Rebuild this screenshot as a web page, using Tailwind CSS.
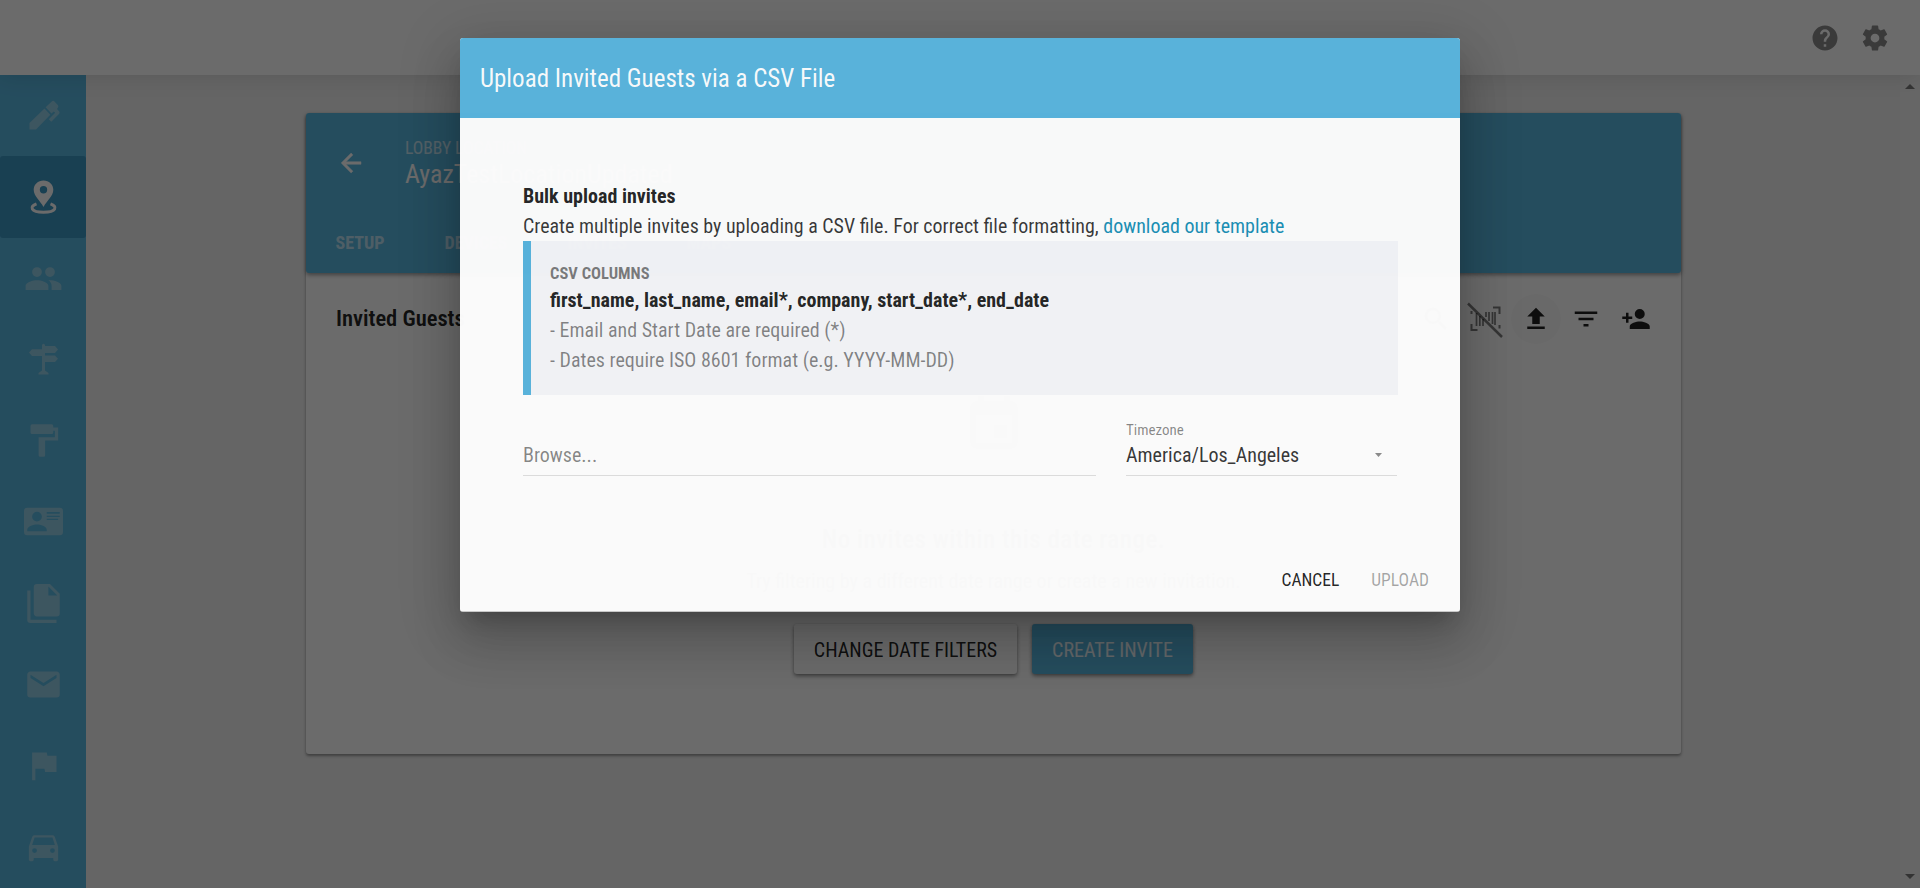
<!DOCTYPE html>
<html lang="en">
<head>
<meta charset="utf-8">
<title>Upload Invited Guests</title>
<script src="https://cdn.jsdelivr.net/npm/@tailwindcss/browser@4"></script>
</head>
<body class="relative flex h-[888px] flex-col overflow-hidden bg-[#f0f0f0] font-['Roboto_Condensed',Roboto,sans-serif] text-[20px] text-black/87">

<!-- Top bar -->
<header class="relative z-10 flex h-[75px] shrink-0 items-center justify-end gap-5 bg-white pr-[30px] text-[#8a8a8a] shadow-[0_0_22px_rgba(0,0,0,0.13)]">
  <svg class="size-[30px]" viewBox="0 0 24 24" fill="currentColor"><path d="M15.07,11.25L14.17,12.17C13.45,12.89 13,13.5 13,15H11V14.5C11,13.39 11.45,12.39 12.17,11.67L13.41,10.41C13.78,10.05 14,9.55 14,9C14,7.89 13.1,7 12,7A2,2 0 0,0 10,9H8A4,4 0 0,1 12,5A4,4 0 0,1 16,9C16,9.88 15.64,10.67 15.07,11.25M13,19H11V17H13M12,2A10,10 0 0,0 2,12A10,10 0 0,0 12,22A10,10 0 0,0 22,12C22,6.47 17.5,2 12,2Z"/></svg>
  <svg class="size-[30px]" viewBox="0 0 24 24" fill="currentColor"><path d="M12,15.5A3.5,3.5 0 0,1 8.5,12A3.5,3.5 0 0,1 12,8.5A3.5,3.5 0 0,1 15.5,12A3.5,3.5 0 0,1 12,15.5M19.43,12.97C19.47,12.65 19.5,12.33 19.5,12C19.5,11.67 19.47,11.34 19.43,11L21.54,9.37C21.73,9.22 21.78,8.95 21.66,8.73L19.66,5.27C19.54,5.05 19.27,4.96 19.05,5.05L16.56,6.05C16.04,5.66 15.5,5.32 14.87,5.07L14.5,2.42C14.46,2.18 14.25,2 14,2H10C9.75,2 9.54,2.18 9.5,2.42L9.13,5.07C8.5,5.32 7.96,5.66 7.44,6.05L4.95,5.05C4.73,4.96 4.46,5.05 4.34,5.27L2.34,8.73C2.21,8.95 2.27,9.22 2.46,9.37L4.57,11C4.53,11.34 4.5,11.67 4.5,12C4.5,12.33 4.53,12.65 4.57,12.97L2.46,14.63C2.27,14.78 2.21,15.05 2.34,15.27L4.34,18.73C4.46,18.95 4.73,19.03 4.95,18.95L7.44,17.94C7.96,18.34 8.5,18.68 9.13,18.93L9.5,21.58C9.54,21.82 9.75,22 10,22H14C14.25,22 14.46,21.82 14.5,21.58L14.87,18.93C15.5,18.67 16.04,18.34 16.56,17.94L19.05,18.95C19.27,19.03 19.54,18.95 19.66,18.73L21.66,15.27C21.78,15.05 21.73,14.78 21.54,14.63L19.43,12.97Z"/></svg>
</header>

<div class="flex h-[813px]">
  <!-- Sidebar -->
  <nav class="flex w-[86px] shrink-0 flex-col bg-[#5ab7e0] text-[#92cde4] *:flex *:h-[81.25px] *:shrink-0 *:items-center *:justify-center">
    <a><svg class="size-[39px]" viewBox="0 0 39 39" fill="currentColor"><path d="M5.500 33.500V27L20.500 12.500L26.300 18.700L12 33.500Z M21.600 11.300L28 5.200Q29.100 4.400 30.200 5.200L34 9.200Q34.800 10.500 34 11.600L33 13L35.300 15.600Q36 16.800 35.200 17.800L27.300 25.700L24.800 23.300L31.200 16.800L29.800 15.500L27.500 17.500Z"/></svg></a>
    <a class="rounded-[3px] bg-[#3c98c3] pt-px text-white"><svg class="size-[39px]" viewBox="0 0 39 39" fill="currentColor"><path d="M19.500 2.500C14 2.500 9.700 6.500 9.700 11.800C9.700 18 16 22.500 19.500 29C23 22.500 29.300 18 29.300 11.800C29.300 6.500 25 2.500 19.500 2.500ZM19.500 8A3.700 3.700 0 1 1 19.500 15.400A3.700 3.700 0 0 1 19.500 8Z"/><path d="M12.500 25.800C5 28.500 6.500 34.300 19.500 34.300C32.500 34.300 34 28.500 26.500 25.800" fill="none" stroke="currentColor" stroke-width="3"/></svg></a>
    <a><svg class="size-[39px]" viewBox="0 0 24 24" fill="currentColor"><path d="M16,13C15.710,13 15.380,13 15.030,13.050C16.190,13.890 17,15 17,16.500V19H23V16.500C23,14.170 18.330,13 16,13M8,13C5.670,13 1,14.170 1,16.500V19H15V16.500C15,14.170 10.330,13 8,13M8,11A3,3 0 0,0 11,8A3,3 0 0,0 8,5A3,3 0 0,0 5,8A3,3 0 0,0 8,11M16,11A3,3 0 0,0 19,8A3,3 0 0,0 16,5A3,3 0 0,0 13,8A3,3 0 0,0 16,11Z"/></svg></a>
    <a><svg class="size-[39px]" viewBox="0 0 39 39" fill="currentColor"><path d="M18 5Q19.500 2.500 21 5V6H31L34 9.500L31 13H21V15.500H31L34 18.700L31 22H21V30.500L24.500 33V34.500H14.500V33L18 30.500V16H8L5 12.500L8 9.300H18Z"/></svg></a>
    <a><svg class="size-[39px]" viewBox="0 0 24 24" fill="currentColor"><path d="M18,4V3A1,1 0 0,0 17,2H5A1,1 0 0,0 4,3V7A1,1 0 0,0 5,8H17A1,1 0 0,0 18,7V6H19V10H9V21A1,1 0 0,0 10,22H12A1,1 0 0,0 13,21V12H21V4H18Z"/></svg></a>
    <a><svg class="size-[39px]" viewBox="0 0 24 24" fill="currentColor" fill-rule="evenodd"><path d="M2 3.500H22A2 2 0 0 1 24 5.500V18.500A2 2 0 0 1 22 20.500H2A2 2 0 0 1 0 18.500V5.500A2 2 0 0 1 2 3.500ZM14 6.200V7.200H22V6.200ZM14 8.400V9.200H22V8.400ZM14 10.300V11.100H21V10.300ZM8 6A3 3 0 1 0 8 12A3 3 0 0 0 8 6ZM2 17V18H14V17C14 15 10 13.900 8 13.900C6 13.900 2 15 2 17Z"/></svg></a>
    <a><svg class="size-[39px]" viewBox="0 0 24 24" fill="currentColor"><path d="M15,7H20.500L15,1.500V7M8,0H16L22,6V18A2,2 0 0,1 20,20H8C6.890,20 6,19.100 6,18V2A2,2 0 0,1 8,0M4,4V22H20V24H4A2,2 0 0,1 2,22V4H4Z"/></svg></a>
    <a><svg class="size-[39px]" viewBox="0 0 24 24" fill="currentColor"><path d="M20,8L12,13L4,8V6L12,11L20,6M20,4H4C2.890,4 2,4.890 2,6V18A2,2 0 0,0 4,20H20A2,2 0 0,0 22,18V6C22,4.890 21.100,4 20,4Z"/></svg></a>
    <a><svg class="size-[39px]" viewBox="0 0 24 24" fill="currentColor"><path d="M14.400,6L14,4H5V21H7V14H12.600L13,16H20V6H14.400Z"/></svg></a>
    <a><svg class="size-[39px]" viewBox="0 0 24 24" fill="currentColor"><path d="M5,11L6.500,6.500H17.500L19,11M17.500,16A1.500,1.500 0 0,1 16,14.500A1.500,1.500 0 0,1 17.500,13A1.500,1.500 0 0,1 19,14.500A1.500,1.500 0 0,1 17.500,16M6.500,16A1.500,1.500 0 0,1 5,14.500A1.500,1.500 0 0,1 6.500,13A1.500,1.500 0 0,1 8,14.500A1.500,1.500 0 0,1 6.500,16M18.920,6C18.720,5.420 18.160,5 17.500,5H6.500C5.840,5 5.280,5.420 5.080,6L3,12V20A1,1 0 0,0 4,21H5A1,1 0 0,0 6,20V19H18V20A1,1 0 0,0 19,21H20A1,1 0 0,0 21,20V12L18.920,6Z"/></svg></a>
  </nav>

  <!-- Content -->
  <main class="flex grow justify-center pl-px pt-[38px]">
    <section class="h-[641px] w-[1375px] rounded-[3px] bg-white shadow-[0_2px_3px_rgba(0,0,0,0.35),0_1px_3px_rgba(0,0,0,0.06)]">
      <div class="flex h-[160px] flex-col rounded-[3px] bg-[#5ab7e0] text-white shadow-[0_2px_4px_rgba(0,0,0,0.4)]">
        <div class="flex h-[98px] items-center pl-[30px] pt-[2px]">
          <svg class="size-[30px]" viewBox="0 0 24 24" fill="currentColor"><path d="M20,11V13H8L13.500,18.500L12.080,19.920L4.160,12L12.080,4.080L13.500,5.500L8,11H20Z" stroke="currentColor" stroke-width=".4"/></svg>
          <div class="ml-[39px] flex flex-col">
            <span class="text-[17.5px] leading-[22px] text-white/65">LOBBY LOCATION</span>
            <span class="text-[26px] leading-[31px]">AyazTestLocationUpdated</span>
          </div>
        </div>
        <div class="flex h-[62px] items-center gap-[60px] pl-[29.5px] text-[18px] font-bold text-white/60">
          <span>SETUP</span><span>DEVICES</span><span>INVITES</span><span>MAPS</span>
        </div>
      </div>
      <div class="flex h-[92px] items-center justify-between pl-[30px] pr-[20px]">
        <h2 class="text-[22.500px] font-semibold">Invited Guests</h2>
        <div class="flex *:flex *:size-[50px] *:items-center *:justify-center *:rounded-full">
          <span class="text-black/70"><svg class="size-[30px]" viewBox="0 0 24 24" fill="currentColor"><path d="M9.500,3A6.500,6.500 0 0,1 16,9.500C16,11.110 15.410,12.590 14.440,13.730L14.710,14H15.500L20.500,19L19,20.500L14,15.500V14.710L13.730,14.440C12.590,15.410 11.110,16 9.500,16A6.500,6.500 0 0,1 3,9.500A6.500,6.500 0 0,1 9.500,3M9.500,5C7,5 5,7 5,9.500C5,12 7,14 9.500,14C12,14 14,12 14,9.500C14,7 12,5 9.500,5Z"/></svg></span>
          <span class="text-black/50"><svg class="size-[38px]" viewBox="0 0 38 38" fill="none" stroke="currentColor" stroke-width="2"><path d="M26 7.500H32.500V14M32.500 25V28.500M4.500 11V14M4.500 24V30H10.500"/><path d="M9.500 13V26M12.800 16V26M16 19V26M19 12V17M22 12V21M25.500 12V24M28 12V25" stroke-width="1.700"/><path d="M1 3.500L35 37" stroke-width="2.500"/></svg></span>
          <span class="bg-black/[0.02]"><svg class="size-[30px]" viewBox="0 0 24 24" fill="currentColor"><path d="M9,16V10H5L12,3L19,10H15V16H9M5,20V18H19V20H5Z"/></svg></span>
          <span><svg class="size-[30px]" viewBox="0 0 24 24" fill="currentColor"><path d="M6,13H18V11H6M3,6V8H21V6M10,18H14V16H10V18Z"/></svg></span>
          <span><svg class="size-[30px]" viewBox="0 0 24 24" fill="currentColor"><path d="M15,14C12.330,14 7,15.330 7,18V20H23V18C23,15.330 17.670,14 15,14M6,10V7H4V10H1V12H4V15H6V12H9V10M15,12A4,4 0 0,0 19,8A4,4 0 0,0 15,4A4,4 0 0,0 11,8A4,4 0 0,0 15,12Z"/></svg></span>
        </div>
      </div>
      <div class="flex flex-col items-center pt-[29px]">
        <svg class="size-[62px] text-black/30" viewBox="0 0 24 24" fill="currentColor"><path d="M19,19H5V8H19M16,1V3H8V1H6V3H5C3.890,3 3,3.890 3,5V19A2,2 0 0,0 5,21H19A2,2 0 0,0 21,19V5C21,3.890 20.100,3 19,3H18V1M17,12H12V17H17V12Z"/></svg>
        <p class="mt-[66px] text-[25px] font-medium leading-[36px] tracking-[0.5px]">No invites within this date range.</p>
        <p class="mt-[8px] leading-[30px]">Try filtering by a different date range or create a new invitation.</p>
        <div class="mt-[28px] flex h-[50px] gap-[15px] *:flex *:items-center *:justify-center *:rounded-[3px] *:pt-px *:shadow-[0_2px_4px_rgba(0,0,0,0.4),0_1px_3px_rgba(0,0,0,0.12)]">
          <button class="w-[223px]">CHANGE DATE FILTERS</button>
          <button class="w-[161px] bg-[#5ab7e0] text-white/90">CREATE INVITE</button>
        </div>
      </div>
    </section>
  </main>

  <!-- Scroll track -->
  <div class="flex w-[20px] shrink-0 flex-col items-center justify-between bg-[#f3f3f3] py-[9px] text-[#7b7b7b]">
    <svg class="h-[5px] w-[10px]" viewBox="0 0 10 5" fill="currentColor"><path d="M0 5L5 0L10 5Z"/></svg>
    <svg class="h-[5px] w-[10px]" viewBox="0 0 10 5" fill="currentColor"><path d="M0 0L5 5L10 0Z"/></svg>
  </div>
</div>

<!-- Modal -->
<div class="absolute inset-0 z-20 flex items-start justify-center bg-black/58 pt-[38px]">
  <div class="flex h-[573.5px] w-[1000px] flex-col overflow-hidden rounded-[3px] bg-[#fdfdfd] opacity-98 shadow-[0_14px_19px_-9px_rgba(0,0,0,0.2),0_30px_48px_4px_rgba(0,0,0,0.14),0_11px_58px_10px_rgba(0,0,0,0.12)]">
    <div class="flex h-[80px] shrink-0 items-center bg-[#59b4dd] pl-[20px] pt-[2px] text-[25px] font-[450] text-white/97">Upload Invited Guests via a CSV File</div>
    <div class="flex flex-col px-[63px] pt-[63px]">
      <h3 class="font-bold leading-[30px]">Bulk upload invites</h3>
      <p class="text-[19.970px] leading-[30px] text-black/78">Create multiple invites by uploading a CSV file. For correct file formatting, <a class="text-[#1b90b5]">download our template</a></p>
      <div class="flex h-[154px] w-[875px] flex-col border-l-8 border-[#59b4dd] bg-[#f3f4f7] pl-[19px] pt-[22px]">
        <span class="text-[16.500px] font-bold leading-[22px] text-black/50">CSV COLUMNS</span>
        <span class="font-bold leading-[30px]">first_name, last_name, email*, company, start_date*, end_date</span>
        <span class="leading-[30px] text-black/47">- Email and Start Date are required (*)</span>
        <span class="leading-[30px] text-black/47">- Dates require ISO 8601 format (e.g. YYYY-MM-DD)</span>
      </div>
      <div class="mt-[24px] flex items-end gap-[30px]">
        <div class="flex h-[57px] w-[573px] items-end border-b border-black/12 pb-[5px] leading-[30px] text-black/47">Browse...</div>
        <div class="flex h-[57px] w-[271px] flex-col justify-end border-b border-black/12 pb-[5px]">
          <span class="text-[15px] leading-[20px] text-black/47">Timezone</span>
          <div class="flex items-center justify-between pr-[15px] leading-[30px] text-black/80">America/Los_Angeles
            <svg class="h-[4px] w-[7px] text-black/45" viewBox="0 0 7 4" fill="currentColor"><path d="M0 0H7L3.500 4Z"/></svg>
          </div>
        </div>
      </div>
    </div>
    <div class="mt-auto flex h-[62px] items-center justify-end gap-[32px] border-b border-black/20 pr-[31px] text-[17.500px]">
      <button>CANCEL</button>
      <button class="text-black/35">UPLOAD</button>
    </div>
  </div>
</div>
</body>
</html>
